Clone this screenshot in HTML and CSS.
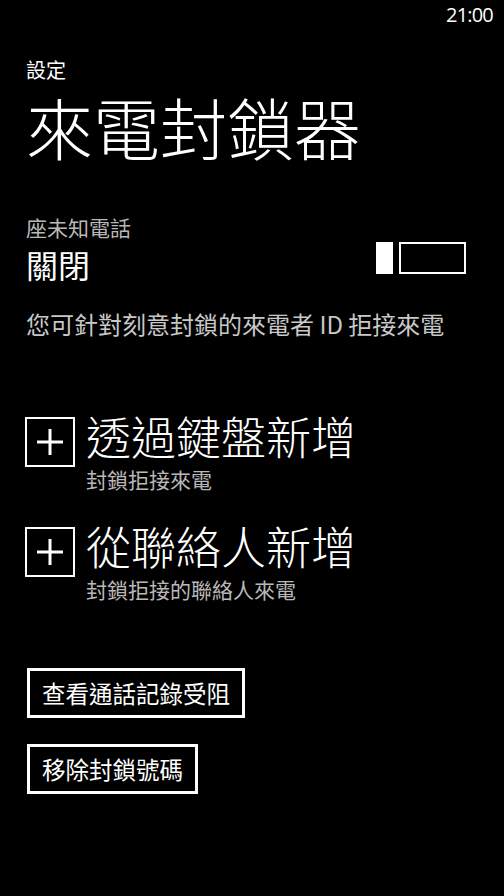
FILE: index.html
```html
<!DOCTYPE html>
<html lang="zh-Hant">
<head>
<meta charset="utf-8">
<title>來電封鎖器</title>
<link rel="stylesheet" href="styles.css">
</head>
<body>
<div class="phone">
  <div class="status"><span class="time">21:00</span></div>
  <main class="page">
    <div class="pivot">設定</div>
    <h1 class="title">來電封鎖器</h1>

    <div class="label">座未知電話</div>
    <div class="toggle-row">
      <div class="toggle-state">關閉</div>
      <div class="toggle" role="switch" aria-checked="false">
        <span class="thumb"></span>
        <span class="track"></span>
      </div>
    </div>
    <p class="desc">您可針對刻意封鎖的來電者 ID 拒接來電</p>

    <div class="action first">
      <div class="plus-box">
        <svg width="26" height="26" viewBox="0 0 26 26"><path d="M0 13H26M13 0V26" stroke="#fff" stroke-width="3"/></svg>
      </div>
      <div class="action-text">
        <div class="action-title">透過鍵盤新增</div>
        <div class="action-sub">封鎖拒接來電</div>
      </div>
    </div>

    <div class="action second">
      <div class="plus-box">
        <svg width="26" height="26" viewBox="0 0 26 26"><path d="M0 13H26M13 0V26" stroke="#fff" stroke-width="3"/></svg>
      </div>
      <div class="action-text">
        <div class="action-title">從聯絡人新增</div>
        <div class="action-sub">封鎖拒接的聯絡人來電</div>
      </div>
    </div>

    <div class="buttons">
      <button class="btn">查看通話記錄受阻</button>
      <button class="btn">移除封鎖號碼</button>
    </div>
  </main>
</div>
</body>
</html>
```

FILE: styles.css
```css
html, body {
  margin: 0;
  padding: 0;
  background: #000;
}
body {
  color: #fff;
  font-family: "Noto Sans CJK TC", "Noto Sans", sans-serif;
  width: 504px;
  height: 896px;
  overflow: hidden;
}
.phone {
  width: 504px;
  height: 896px;
}
.status {
  height: 30px;
  line-height: 30px;
  text-align: right;
  padding-right: 11px;
}
.time {
  font-family: "Open Sans", "Noto Sans", sans-serif;
  font-size: 20px;
  letter-spacing: -0.8px;
}
.page {
  padding: 0 26px;
}
.pivot {
  margin-top: 28px;
  font-size: 20px;
  line-height: 24px;
}
.title {
  margin: 11px 0 0 0;
  font-size: 67px;
  line-height: 66px;
  font-weight: 300;
}
.label {
  margin-top: 56px;
  font-size: 21px;
  line-height: 24px;
  color: #b8b8b8;
}
.toggle-row {
  margin-top: 7px;
  display: flex;
  justify-content: space-between;
  align-items: flex-start;
}
.toggle-state {
  font-size: 32px;
  line-height: 36px;
}
.toggle {
  margin-top: -4px;
  margin-right: 12px;
  display: flex;
  gap: 6px;
}
.thumb {
  width: 17px;
  height: 32px;
  background: #fff;
}
.track {
  width: 63px;
  height: 28px;
  border: 2px solid #fff;
}
.desc {
  margin: 27.5px 0 0 0;
  font-size: 24px;
  line-height: 28px;
  color: #c8c8c8;
}
.action {
  display: flex;
  align-items: flex-start;
  gap: 11px;
}
.action.first {
  margin-top: 74px;
}
.action.second {
  margin-top: 31.5px;
}
.plus-box {
  margin-top: 5px;
  margin-left: -1px;
  width: 46px;
  height: 46px;
  border: 2px solid #fff;
  display: flex;
  align-items: center;
  justify-content: center;
}
.plus-box svg {
  display: block;
}
.action-title {
  font-size: 45px;
  line-height: 48px;
  font-weight: 300;
}
.action-sub {
  margin-top: 7px;
  font-size: 21px;
  line-height: 24px;
  color: #b8b8b8;
}
.buttons {
  margin-top: 67px;
  display: flex;
  flex-direction: column;
  align-items: flex-start;
  gap: 26px;
}
.btn {
  margin-left: 1px;
  background: #000;
  color: #fff;
  border: 3px solid #fff;
  border-radius: 0;
  height: 50px;
  padding: 0 12px;
  font-family: "Noto Sans CJK TC", "Noto Sans", sans-serif;
  font-size: 23.5px;
  line-height: 44px;
  cursor: pointer;
}
```
